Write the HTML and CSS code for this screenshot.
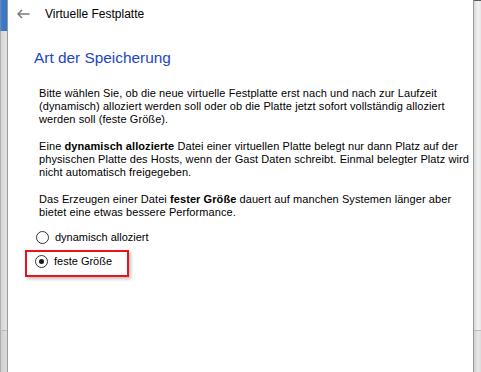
FILE: index.html
```html
<!DOCTYPE html>
<html lang="de">
<head>
<meta charset="utf-8">
<link rel="stylesheet" href="styles.css">
</head>
<body>
<div class="frame">
  <div class="strip strip-left">
    <div class="strip-top"></div>
    <div class="strip-mid"></div>
    <div class="strip-bottom"></div>
  </div>
  <main class="panel">
    <header class="titlebar">
      <svg class="back" width="13" height="10" viewBox="0 0 13 10"><path d="M5 1 L1 5 L5 9 M1 5 H12.5" fill="none" stroke="#7a7a7a" stroke-width="1.5"/></svg>
      <span class="title">Virtuelle Festplatte</span>
    </header>
    <section class="content">
      <h1 class="heading">Art der Speicherung</h1>
      <p class="para">Bitte wählen Sie, ob die neue virtuelle Festplatte erst nach und nach zur Laufzeit (dynamisch) alloziert werden soll oder ob die Platte jetzt sofort vollständig alloziert werden soll (feste Größe).</p>
      <p class="para">Eine <b>dynamisch allozierte</b> Datei einer virtuellen Platte belegt nur dann Platz auf der physischen Platte des Hosts, wenn der Gast Daten schreibt. Einmal belegter Platz wird nicht automatisch freigegeben.</p>
      <p class="para">Das Erzeugen einer Datei <b>fester Größe</b> dauert auf manchen Systemen länger aber bietet eine etwas bessere Performance.</p>
      <div class="options">
        <label class="option"><span class="radio"></span>dynamisch alloziert</label>
        <div class="highlight">
          <label class="option"><span class="radio checked"></span>feste Größe</label>
        </div>
      </div>
    </section>
  </main>
  <div class="strip strip-right">
    <div class="strip-top"></div>
    <div class="strip-mid"></div>
    <div class="strip-bottom"></div>
  </div>
</div>
</body>
</html>
```
FILE: styles.css
```css
html, body {
  margin: 0;
  padding: 0;
  height: 100%;
  background: #ffffff;
}
.frame {
  display: flex;
  height: 372px;
  width: 481px;
  overflow: hidden;
}
.strip {
  width: 8px;
  flex: none;
  display: flex;
  flex-direction: column;
}
.strip-left {
  border-right: 1px solid #9a9a9a;
  width: 7px;
}
.strip-left .strip-top {
  height: 31px;
  background: linear-gradient(90deg, #6c8fb8 0, #3f78c8 2px, #3a74c6 100%);
}
.strip-left .strip-mid {
  height: 299px;
  background: linear-gradient(90deg, #8a8a8a 0, #d6d6d6 1px, #e4e4e4 100%);
  border-bottom: 1px solid #bdbdbd;
}
.strip-left .strip-bottom {
  flex: 1;
  background: linear-gradient(90deg, #8a8a8a 0, #d0d0d0 1px, #dcdcdc 100%);
}
.strip-right {
  border-left: 1px solid #9a9a9a;
  width: 7px;
}
.strip-right .strip-top {
  height: 1px;
  background: #5a5a5a;
}
.strip-right .strip-mid {
  height: 329px;
  background: linear-gradient(90deg, #d8d8d8, #f2f2f2 60%, #e6e6e6);
  border-bottom: 1px solid #bdbdbd;
}
.strip-right .strip-bottom {
  flex: 1;
  background: linear-gradient(90deg, #cfcfcf, #e8e8e8 60%, #dadada);
}
.panel {
  flex: 1;
  background: #ffffff;
  font-family: "Liberation Sans", Arial, sans-serif;
  color: #000000;
}
.titlebar {
  display: flex;
  align-items: center;
  height: 28px;
  padding-left: 9px;
}
.back {
  display: block;
  margin-right: 15px;
}
.title {
  font-size: 12px;
  color: #000;
}
.content {
  padding: 20px 0 0 26px;
}
.heading {
  margin: 0 0 19px 0;
  font-size: 15.4px;
  font-weight: normal;
  color: #1d45c6;
  line-height: 20px;
}
.para {
  margin: 0 0 14px 5px;
  font-size: 11px;
  letter-spacing: 0.08px;
  line-height: 13px;
}
.para:last-of-type {
  margin-bottom: 0;
}
.options {
  margin-top: 11px;
  margin-left: 2px;
  display: flex;
  flex-direction: column;
  align-items: flex-start;
}
.option {
  display: flex;
  align-items: center;
  font-size: 11px;
  line-height: 14px;
}
.radio {
  width: 11px;
  height: 11px;
  border: 1px solid #333;
  border-radius: 50%;
  margin-right: 6px;
  box-sizing: content-box;
  position: relative;
  background: #fff;
}
.radio.checked::after {
  content: "";
  position: absolute;
  left: 3px;
  top: 3px;
  width: 5px;
  height: 5px;
  border-radius: 50%;
  background: #1a1a1a;
}
.highlight {
  margin-top: 6px;
  margin-left: -11px;
  padding: 2px 15px 7px 8px;
  border: 2.5px solid #e8141c;
  box-shadow: 2px 2px 3px rgba(0,0,0,0.25);
}
```
